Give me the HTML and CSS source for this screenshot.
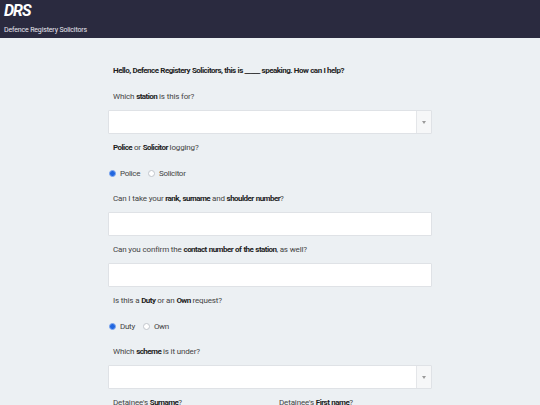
FILE: index.html
```html
<!DOCTYPE html>
<html lang="en">
<head>
<meta charset="utf-8">
<title>DRS - Defence Registery Solicitors</title>
<link rel="stylesheet" href="styles.css">
</head>
<body>
<header class="topbar">
  <div class="brand">DRS</div>
  <div class="brand-sub">Defence Registery Solicitors</div>
</header>
<main class="form">
  <p class="greeting">Hello, Defence Registery Solicitors, this is _____ speaking. How can I help?</p>

  <div class="field">
    <label class="label">Which <b>station</b> is this for?</label>
    <div class="select"><span class="select-value"></span><span class="select-arrow"><span class="caret"></span></span></div>
  </div>

  <div class="field">
    <label class="label"><b>Police</b> or <b>Solicitor</b> logging?</label>
    <div class="radios">
      <span class="radio"><span class="dot checked"></span>Police</span>
      <span class="radio"><span class="dot"></span>Solicitor</span>
    </div>
  </div>

  <div class="field">
    <label class="label">Can I take your <b>rank, surname</b> and <b>shoulder number</b>?</label>
    <div class="input"></div>
  </div>

  <div class="field">
    <label class="label">Can you confirm the <b>contact number of the station</b>, as well?</label>
    <div class="input"></div>
  </div>

  <div class="field">
    <label class="label">Is this a <b>Duty</b> or an <b>Own</b> request?</label>
    <div class="radios">
      <span class="radio"><span class="dot checked"></span>Duty</span>
      <span class="radio"><span class="dot"></span>Own</span>
    </div>
  </div>

  <div class="field">
    <label class="label">Which <b>scheme</b> is it under?</label>
    <div class="select"><span class="select-value"></span><span class="select-arrow"><span class="caret"></span></span></div>
  </div>

  <div class="split">
    <div class="field">
      <label class="label">Detainee's <b>Surname</b>?</label>
      <div class="input"></div>
    </div>
    <div class="field">
      <label class="label">Detainee's <b>First name</b>?</label>
      <div class="input"></div>
    </div>
  </div>
</main>
</body>
</html>
```

FILE: styles.css
```css
html, body {
  margin: 0;
  padding: 0;
}

body {
  background: #ecf0f3;
  font-family: Roboto, "Liberation Sans", sans-serif;
  font-size: 8px;
  letter-spacing: -0.15px;
  color: #444444;
  height: 405px;
  overflow: hidden;
}

b {
  color: #1e1e1e;
  font-weight: bold;
  letter-spacing: -0.55px;
  word-spacing: 0.6px;
}

/* top bar */
.topbar {
  background: #2a2a3f;
  height: 38px;
  box-sizing: border-box;
  padding: 1px 4px 0;
  color: #ffffff;
}

.brand {
  font-size: 16px;
  font-weight: bold;
  font-style: italic;
  letter-spacing: -1px;
  line-height: 19px;
}

.brand-sub {
  margin-top: 5px;
  font-size: 7px;
  line-height: 10px;
  color: #e6e6ee;
}

/* form column */
.form {
  width: 324px;
  margin: 0 0 0 108px;
  padding-top: 28px;
}

.greeting {
  margin: 0 0 16px;
  padding-left: 5px;
  line-height: 10px;
  font-weight: bold;
  letter-spacing: -0.5px;
  word-spacing: 0.3px;
  color: #1e1e1e;
}

.field {
  margin-bottom: 9px;
}

.label {
  display: block;
  padding-left: 5px;
  line-height: 10px;
  margin-bottom: 8px;
}

.input,
.select {
  height: 24px;
  box-sizing: border-box;
  background: #ffffff;
  border: 1px solid #dfe2e6;
  border-radius: 1px;
}

.select {
  display: flex;
}

.select-value {
  flex: 1;
}

.select-arrow {
  width: 14px;
  border-left: 1px solid #e4e6e9;
  background: #f6f7f8;
  display: flex;
  align-items: center;
  justify-content: center;
}

.caret {
  width: 0;
  height: 0;
  border-left: 2px solid transparent;
  border-right: 2px solid transparent;
  border-top: 3px solid #9a9a9a;
}

/* radio rows */
.radios {
  height: 24px;
  display: flex;
  align-items: center;
  gap: 8px;
  padding-left: 1px;
  letter-spacing: -0.3px;
}

.radio {
  display: flex;
  align-items: center;
  gap: 4px;
}

.dot {
  width: 5px;
  height: 5px;
  border-radius: 50%;
  border: 1px solid #c2c6cc;
  background: #ffffff;
}

.dot.checked {
  background: #2166e0;
  border-color: #7fa8ef;
}

/* two-column row */
.split {
  display: grid;
  grid-template-columns: 1fr 1fr;
  gap: 8px;
}
```
